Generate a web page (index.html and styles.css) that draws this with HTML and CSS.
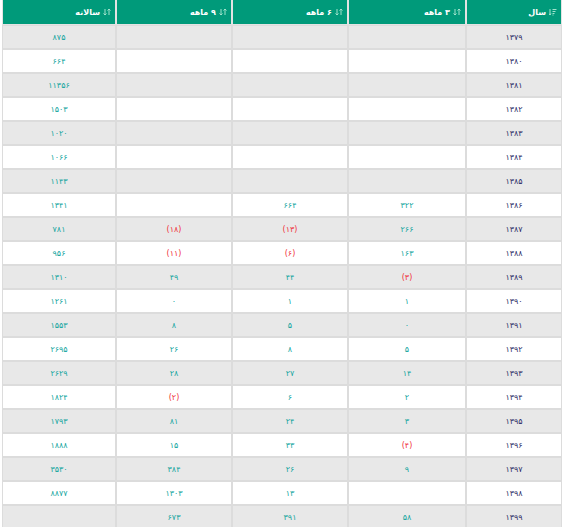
FILE: index.html
```html
<!DOCTYPE html>
<html lang="fa" dir="rtl">
<head>
<meta charset="utf-8">
<link rel="stylesheet" href="styles.css">
</head>
<body>
<table class="grid">
  <colgroup>
    <col class="c-year"><col class="c-q"><col class="c-h"><col class="c-n"><col class="c-a">
  </colgroup>
  <thead>
    <tr>
      <th><span class="ico"><svg viewBox="0 0 8 8" width="8" height="8"><path d="M1 1v6M0 5.5l1 1.5 1-1.5" stroke="currentColor" fill="none" stroke-width="1"/><path d="M3.5 1.5h4M3.5 3.5h3M3.5 5.5h2M3.5 7h1" stroke="currentColor" stroke-width="1"/></svg></span>سال</th>
      <th><span class="ico"><svg viewBox="0 0 8 8" width="8" height="8"><path d="M2 1v6M0.5 5.5L2 7l1.5-1.5M6 7V1M4.5 2.5L6 1l1.5 1.5" stroke="currentColor" fill="none" stroke-width="1"/></svg></span>۳ ماهه</th>
      <th><span class="ico"><svg viewBox="0 0 8 8" width="8" height="8"><path d="M2 1v6M0.5 5.5L2 7l1.5-1.5M6 7V1M4.5 2.5L6 1l1.5 1.5" stroke="currentColor" fill="none" stroke-width="1"/></svg></span>۶ ماهه</th>
      <th><span class="ico"><svg viewBox="0 0 8 8" width="8" height="8"><path d="M2 1v6M0.5 5.5L2 7l1.5-1.5M6 7V1M4.5 2.5L6 1l1.5 1.5" stroke="currentColor" fill="none" stroke-width="1"/></svg></span>۹ ماهه</th>
      <th><span class="ico"><svg viewBox="0 0 8 8" width="8" height="8"><path d="M2 1v6M0.5 5.5L2 7l1.5-1.5M6 7V1M4.5 2.5L6 1l1.5 1.5" stroke="currentColor" fill="none" stroke-width="1"/></svg></span>سالانه</th>
    </tr>
  </thead>
  <tbody>
    <tr><td class="yr">۱۳۷۹</td><td></td><td></td><td></td><td>۸۷۵</td></tr>
    <tr><td class="yr">۱۳۸۰</td><td></td><td></td><td></td><td>۶۶۴</td></tr>
    <tr><td class="yr">۱۳۸۱</td><td></td><td></td><td></td><td>۱۱۳۵۶</td></tr>
    <tr><td class="yr">۱۳۸۲</td><td></td><td></td><td></td><td>۱۵۰۳</td></tr>
    <tr><td class="yr">۱۳۸۳</td><td></td><td></td><td></td><td>۱۰۲۰</td></tr>
    <tr><td class="yr">۱۳۸۴</td><td></td><td></td><td></td><td>۱۰۶۶</td></tr>
    <tr><td class="yr">۱۳۸۵</td><td></td><td></td><td></td><td>۱۱۴۳</td></tr>
    <tr><td class="yr">۱۳۸۶</td><td>۳۲۲</td><td>۶۶۴</td><td></td><td>۱۳۴۱</td></tr>
    <tr><td class="yr">۱۳۸۷</td><td>۲۶۶</td><td class="neg">(۱۳)</td><td class="neg">(۱۸)</td><td>۷۸۱</td></tr>
    <tr><td class="yr">۱۳۸۸</td><td>۱۶۳</td><td class="neg">(۶)</td><td class="neg">(۱۱)</td><td>۹۵۶</td></tr>
    <tr><td class="yr">۱۳۸۹</td><td class="neg">(۳)</td><td>۴۴</td><td>۴۹</td><td>۱۳۱۰</td></tr>
    <tr><td class="yr">۱۳۹۰</td><td>۱</td><td>۱</td><td>۰</td><td>۱۲۶۱</td></tr>
    <tr><td class="yr">۱۳۹۱</td><td>۰</td><td>۵</td><td>۸</td><td>۱۵۵۳</td></tr>
    <tr><td class="yr">۱۳۹۲</td><td>۵</td><td>۸</td><td>۲۶</td><td>۲۶۹۵</td></tr>
    <tr><td class="yr">۱۳۹۳</td><td>۱۴</td><td>۲۷</td><td>۲۸</td><td>۲۶۲۹</td></tr>
    <tr><td class="yr">۱۳۹۴</td><td>۲</td><td>۶</td><td class="neg">(۲)</td><td>۱۸۲۴</td></tr>
    <tr><td class="yr">۱۳۹۵</td><td>۳</td><td>۲۴</td><td>۸۱</td><td>۱۷۹۳</td></tr>
    <tr><td class="yr">۱۳۹۶</td><td class="neg">(۴)</td><td>۳۳</td><td>۱۵</td><td>۱۸۸۸</td></tr>
    <tr><td class="yr">۱۳۹۷</td><td>۹</td><td>۲۶</td><td>۳۸۴</td><td>۳۵۳۰</td></tr>
    <tr><td class="yr">۱۳۹۸</td><td></td><td>۱۳</td><td>۱۳۰۳</td><td>۸۸۷۷</td></tr>
    <tr><td class="yr">۱۳۹۹</td><td>۵۸</td><td>۳۹۱</td><td>۶۷۳</td><td></td></tr>
  </tbody>
</table>
</body>
</html>
```
FILE: styles.css
```css
html, body {
  margin: 0;
  padding: 0;
  background: #fff;
}
body {
  padding: 0 2px;
  font-family: "DejaVu Sans", sans-serif;
}
.grid {
  width: 560px;
  border-collapse: separate;
  border-spacing: 0;
  table-layout: fixed;
  direction: rtl;
}
.c-year { width: 96px; }
.c-q { width: 118px; }
.c-h { width: 116px; }
.c-n { width: 116px; }
.c-a { width: 114px; }
.grid th {
  background: #009a7a;
  color: #fff;
  font-size: 8px;
  font-weight: bold;
  text-align: right;
  height: 24px;
  padding: 0 4px 0 0;
  border: 1px solid #e3e3e3;
  border-top: 0;
  vertical-align: middle;
  white-space: nowrap;
}
.grid th .ico {
  display: inline-block;
  color: #9fe3cc;
  margin-left: 3px;
  vertical-align: middle;
}
.grid th .ico svg { display: block; }
.grid td {
  height: 22px;
  padding: 0;
  border: 1px solid #dcdcdc;
  text-align: center;
  vertical-align: middle;
  font-size: 8px;
  font-weight: normal;
  color: #12a59e;
}
.grid tbody tr:nth-child(odd) td { background: #e8e8e8; }
.grid tbody tr:nth-child(even) td { background: #fff; }
.grid td.yr { color: #2c2c66; }
.grid td.neg { color: #f0303a; }
```
